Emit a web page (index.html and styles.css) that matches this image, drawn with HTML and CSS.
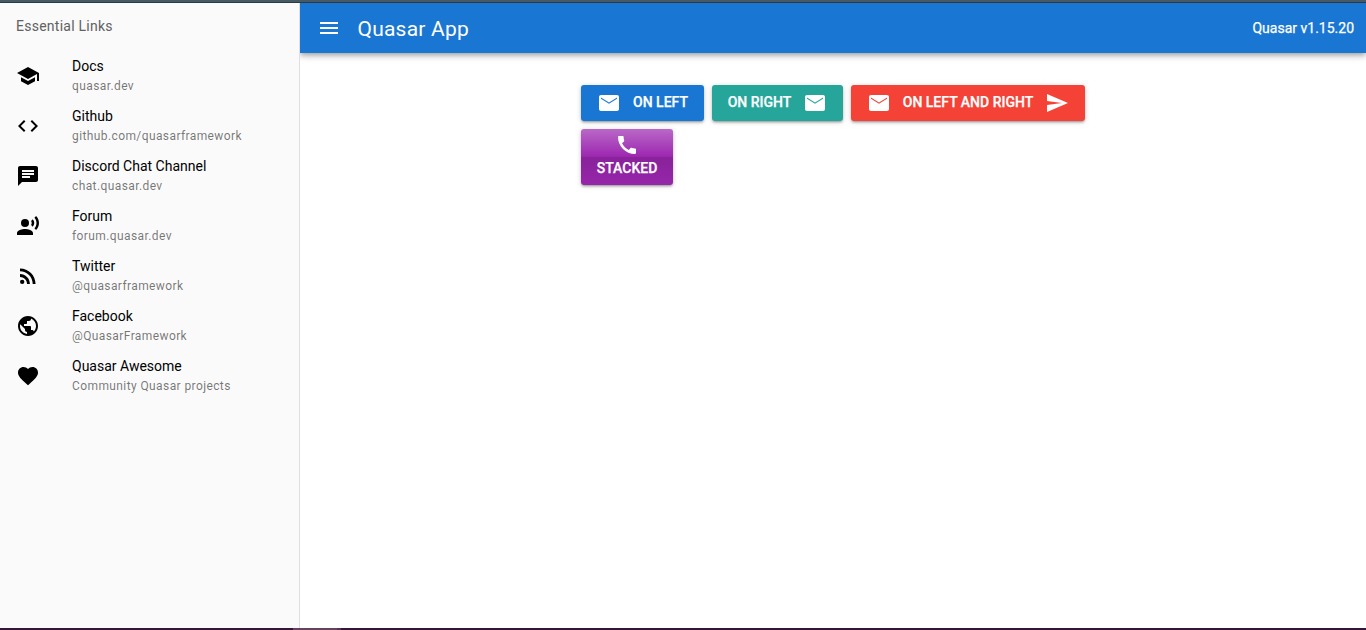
FILE: index.html
```html
<!DOCTYPE html>
<html lang="en">
<head>
<meta charset="utf-8">
<title>Quasar App</title>
<link rel="stylesheet" href="styles.css">
</head>
<body>
<div class="window-top"></div>
<div class="layout">
  <aside class="drawer">
    <div class="drawer-header">Essential Links</div>
    <a class="item"><svg class="icon" viewBox="0 0 24 24"><path d="M5 13.18v4L12 21l7-3.82v-4L12 17l-7-3.82zM12 3L1 9l11 6 9-4.91V17h2V9L12 3z"/></svg><div><div class="label">Docs</div><div class="caption">quasar.dev</div></div></a>
    <a class="item"><svg class="icon" viewBox="0 0 24 24"><path d="M9.4 16.6L4.8 12l4.6-4.6L8 6l-6 6 6 6 1.4-1.4zm5.2 0l4.6-4.6-4.6-4.6L16 6l6 6-6 6-1.4-1.4z"/></svg><div><div class="label">Github</div><div class="caption">github.com/quasarframework</div></div></a>
    <a class="item"><svg class="icon" viewBox="0 0 24 24"><path d="M20 2H4c-1.1 0-1.99.9-1.99 2L2 22l4-4h14c1.1 0 2-.9 2-2V4c0-1.1-.9-2-2-2zM6 9h12v2H6V9zm8 5H6v-2h8v2zm4-6H6V6h12v2z"/></svg><div><div class="label">Discord Chat Channel</div><div class="caption">chat.quasar.dev</div></div></a>
    <a class="item"><svg class="icon" viewBox="0 0 24 24"><circle cx="9" cy="9" r="4"/><path d="M9 15c-2.67 0-8 1.34-8 4v2h16v-2c0-2.66-5.33-4-8-4zm7.76-9.64l-1.68 1.69c.84 1.18.84 2.71 0 3.89l1.68 1.69c2.02-2.02 2.02-5.07 0-7.27zM20.07 2l-1.63 1.63c2.77 3.02 2.77 7.56 0 10.74L20.07 16c3.9-3.89 3.91-9.95 0-14z"/></svg><div><div class="label">Forum</div><div class="caption">forum.quasar.dev</div></div></a>
    <a class="item"><svg class="icon" viewBox="0 0 24 24"><circle cx="6.18" cy="17.82" r="2.18"/><path d="M4 4.44v2.83c7.03 0 12.73 5.7 12.73 12.73h2.83c0-8.59-6.97-15.56-15.56-15.56zm0 5.66v2.83c3.9 0 7.07 3.17 7.07 7.07h2.83c0-5.47-4.43-9.9-9.9-9.9z"/></svg><div><div class="label">Twitter</div><div class="caption">@quasarframework</div></div></a>
    <a class="item"><svg class="icon" viewBox="0 0 24 24"><path d="M12 2C6.48 2 2 6.48 2 12s4.48 10 10 10 10-4.48 10-10S17.52 2 12 2zm-1 17.93c-3.95-.49-7-3.85-7-7.93 0-.62.08-1.21.21-1.79L9 15v1c0 1.1.9 2 2 2v1.93zm6.9-2.54c-.26-.81-1-1.39-1.9-1.39h-1v-3c0-.55-.45-1-1-1H8v-2h2c.55 0 1-.45 1-1V7h2c1.1 0 2-.9 2-2v-.41c2.93 1.19 5 4.06 5 7.41 0 2.08-.8 3.97-2.1 5.39z"/></svg><div><div class="label">Facebook</div><div class="caption">@QuasarFramework</div></div></a>
    <a class="item"><svg class="icon" viewBox="0 0 24 24"><path d="M12 21.35l-1.45-1.32C5.4 15.36 2 12.28 2 8.5 2 5.42 4.42 3 7.5 3c1.74 0 3.41.81 4.5 2.09C13.09 3.81 14.76 3 16.5 3 19.58 3 22 5.42 22 8.5c0 3.78-3.4 6.86-8.55 11.54L12 21.35z"/></svg><div><div class="label">Quasar Awesome</div><div class="caption">Community Quasar projects</div></div></a>
  </aside>
  <main class="main">
    <header class="toolbar">
      <div class="menu"><svg class="icon" viewBox="0 0 24 24"><path d="M3 18h18v-2H3v2zm0-5h18v-2H3v2zm0-7v2h18V6H3z"/></svg></div>
      <div class="title">Quasar App</div>
      <div class="version">Quasar v1.15.20</div>
    </header>
    <section class="buttons">
      <div class="btn primary"><svg class="icon" viewBox="0 0 24 24"><path d="M20 4H4c-1.1 0-1.99.9-1.99 2L2 18c0 1.1.9 2 2 2h16c1.1 0 2-.9 2-2V6c0-1.100-.9-2-2-2zm0 3.800l-8 5-8-5V6.400l8 5 8-5z"/></svg><span>ON LEFT</span></div>
      <div class="btn secondary"><span>ON RIGHT</span><svg class="icon" viewBox="0 0 24 24"><path d="M20 4H4c-1.100 0-1.990.9-1.990 2L2 18c0 1.100.9 2 2 2h16c1.100 0 2-.9 2-2V6c0-1.100-.9-2-2-2zm0 3.800l-8 5-8-5V6.400l8 5 8-5z"/></svg></div>
      <div class="btn red"><svg class="icon" viewBox="0 0 24 24"><path d="M20 4H4c-1.100 0-1.990.9-1.990 2L2 18c0 1.100.9 2 2 2h16c1.100 0 2-.9 2-2V6c0-1.100-.9-2-2-2zm0 3.800l-8 5-8-5V6.400l8 5 8-5z"/></svg><span>ON LEFT AND RIGHT</span><svg class="icon" viewBox="0 0 24 24"><path d="M2.010 21L23 12 2.010 3 2 10l15 2-15 2z"/></svg></div>
      <div class="btn stacked"><svg class="icon" viewBox="0 0 24 24"><path d="M20.010 15.380c-1.230 0-2.420-.2-3.530-.56-.35-.12-.74-.03-1.010.24l-1.570 1.970c-2.830-1.350-5.480-3.900-6.890-6.830l1.950-1.660c.27-.28.35-.67.24-1.020-.37-1.110-.56-2.300-.56-3.530 0-.54-.45-.99-.99-.99H4.190C3.650 3 3 3.240 3 3.990 3 13.280 10.730 21 20.010 21c.71 0 .99-.63.99-1.180v-3.450c0-.54-.45-.99-.99-.99z"/></svg><span>STACKED</span></div>
    </section>
  </main>
</div>
<div class="window-bottom"><div class="tab"></div></div>
</body>
</html>
```
FILE: styles.css
```css
* { box-sizing: border-box; }
body {
  margin: 0;
  height: 630px;
  display: flex;
  flex-direction: column;
  overflow: hidden;
  background: #fff;
  font: 14px/21px Roboto, sans-serif;
  color: #000;
}
.window-top { height: 3px; flex: none; background: #455a64; border-bottom: 1px solid #2b3a42; }
.window-bottom { height: 2px; flex: none; background: #35163a; padding-left: 293px; }
.tab { width: 48px; height: 2px; background: #65425f; border-right: 4px solid #55344f; }
.layout { flex: 1; display: flex; min-height: 0; }
.icon { width: 24px; height: 24px; fill: currentColor; display: block; flex: none; }
.drawer { width: 300px; flex: none; background: #fafafa; border-right: 1px solid #dfdfdf; }
.drawer-header { height: 48px; padding: 15px 16px; line-height: 16px; letter-spacing: .01786em; color: #616161; }
.item { display: flex; align-items: center; gap: 32px; height: 50px; padding: 8px 16px; }
.label { line-height: 14px; padding-bottom: 2px; }
.caption { margin-top: 4px; font-size: 12px; line-height: 14px; letter-spacing: .03333em; color: rgba(0, 0, 0, .54); }
.main { flex: 1; min-width: 0; }
.toolbar {
  display: flex;
  align-items: center;
  height: 50px;
  padding: 0 12px;
  background: #1976d2;
  color: #fff;
  box-shadow: 0 2px 4px -1px rgba(0, 0, 0, .2), 0 4px 5px rgba(0, 0, 0, .14), 0 1px 10px rgba(0, 0, 0, .12);
  clip-path: inset(0 0 -16px 0);
}
.menu { width: 34px; display: flex; justify-content: center; }
.title { flex: 1; padding: 2px 12px 0 11.5px; font-size: 21px; letter-spacing: .01em; }
.version { -webkit-text-stroke: .25px currentColor; }
.buttons { display: flex; flex-wrap: wrap; align-items: flex-start; gap: 8px; width: 510px; margin: 32px 0 0 281px; }
.btn {
  display: flex;
  align-items: center;
  justify-content: center;
  gap: 12px;
  height: 36px;
  padding: 0 15.5px;
  border-radius: 3px;
  color: #fff;
  font-weight: 500;
  line-height: 22px;
  white-space: nowrap;
  box-shadow: 0 1px 5px rgba(0, 0, 0, .2), 0 2px 2px rgba(0, 0, 0, .14), 0 3px 1px -2px rgba(0, 0, 0, .12);
}
.btn span { padding-bottom: 2px; -webkit-text-stroke: .25px currentColor; }
.primary { width: 123px; }
.secondary { width: 131px; }
.red { width: 234px; }
.primary { background: #1976d2; }
.secondary { background: #26a69a; }
.red { background: #f44336; }
.stacked {
  flex-direction: column;
  gap: 0;
  width: 92px;
  height: 56px;
  background: linear-gradient(to bottom, rgba(255, 255, 255, .3), rgba(255, 255, 255, 0) 50%, rgba(0, 0, 0, .12) 51%, rgba(0, 0, 0, .04)), #9c27b0;
}
```
